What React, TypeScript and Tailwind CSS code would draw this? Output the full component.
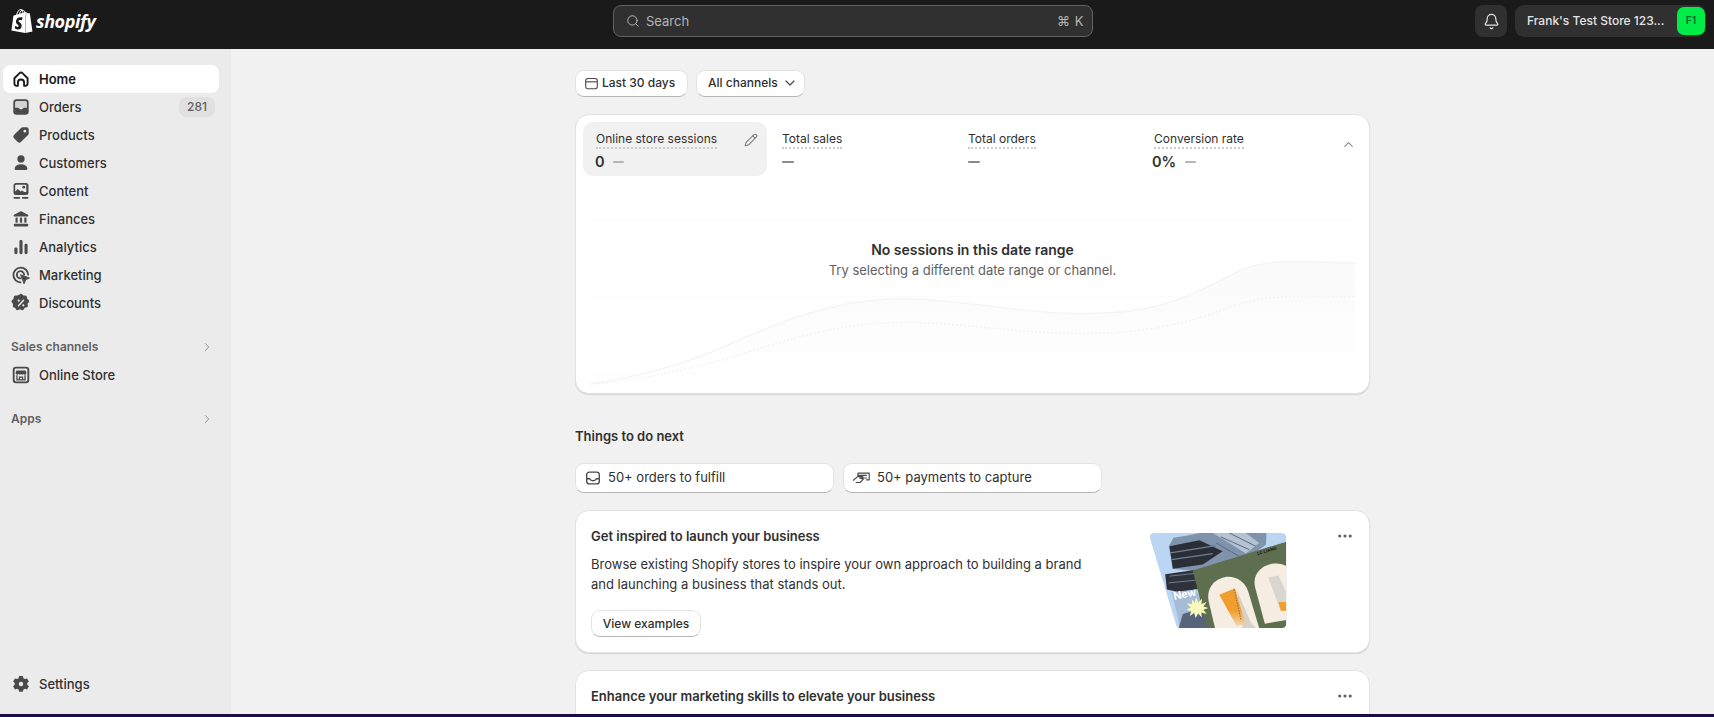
import { ReactNode } from "react"
import { SiShopify } from "react-icons/si"
import { ChevronDown, ChevronRight, ChevronUp, Ellipsis, Search, Pencil, Bell } from "lucide-react"

const ICON = "#4a4a4a"

function HomeIcon() {
  return (
    <svg viewBox="0 0 20 20" className="w-[22px] h-[22px]" fill="none" stroke="#1a1a1a" strokeWidth="1.7" strokeLinejoin="round">
      <path d="M4 9.300 8.700 4.700a1.900 1.900 0 0 1 2.600 0L16 9.300v4.900a2 2 0 0 1-2 2h-1.200v-3a2.800 2.800 0 0 0-5.600 0v3H6a2 2 0 0 1-2-2z" />
    </svg>
  )
}

function OrdersIcon() {
  return (
    <svg viewBox="0 0 20 20" className="w-[22px] h-[22px]">
      <path fill={ICON} fillRule="evenodd" d="M6 3h8a3 3 0 0 1 3 3v8a3 3 0 0 1-3 3H6a3 3 0 0 1-3-3V6a3 3 0 0 1 3-3zm-1.400 7.600h2.600c.6 0 .9.300 1.200.8.300.4.800.8 1.600.8s1.300-.4 1.600-.8c.3-.5.600-.8 1.200-.8h2.600V6A1.400 1.400 0 0 0 14 4.600H6A1.400 1.400 0 0 0 4.600 6z" />
      <path fill={ICON} opacity=".15" d="M4.600 6A1.400 1.400 0 0 1 6 4.600h8A1.400 1.400 0 0 1 15.400 6v4.600H4.600z" />
    </svg>
  )
}

function ProductsIcon() {
  return (
    <svg viewBox="0 0 20 20" className="w-[22px] h-[22px]">
      <path fill={ICON} fillRule="evenodd" d="M11.500 3H15a2 2 0 0 1 2 2v3.500c0 .6-.2 1.100-.6 1.500l-6.500 6.400a2 2 0 0 1-2.800 0l-3.500-3.500a2 2 0 0 1 0-2.800L10 3.600c.4-.4.900-.6 1.500-.6zM13.500 5.200a1.300 1.300 0 1 0 0 2.600 1.300 1.300 0 0 0 0-2.600z" />
    </svg>
  )
}

function CustomersIcon() {
  return (
    <svg viewBox="0 0 20 20" className="w-[22px] h-[22px]" fill={ICON}>
      <circle cx="10" cy="6.300" r="3.300" />
      <path d="M10 11.200c-3.400 0-5.500 1.700-5.800 3.700-.1.800.5 1.400 1.300 1.400h9c.8 0 1.400-.6 1.300-1.400-.3-2-2.400-3.700-5.800-3.700z" />
    </svg>
  )
}

function ContentIcon() {
  return (
    <svg viewBox="0 0 20 20" className="w-[22px] h-[22px]">
      <path fill={ICON} fillRule="evenodd" d="M5.500 2.800h9a2.300 2.300 0 0 1 2.300 2.300v6.200a2.300 2.300 0 0 1-2.300 2.300h-9a2.300 2.300 0 0 1-2.300-2.300V5.100a2.300 2.300 0 0 1 2.300-2.300zm-.8 7.600 2.400-2.300 2.600 2.400 1.200-1 2 1.500h1.900V5.100a.8.8 0 0 0-.8-.8h-8.500a.8.8 0 0 0-.8.8z" />
      <circle cx="12.500" cy="6.500" r="1.300" fill={ICON} />
      <rect x="3.200" y="15.500" width="6" height="1.500" rx=".7" fill={ICON} />
      <rect x="10.800" y="15.500" width="6" height="1.500" rx=".7" fill={ICON} />
    </svg>
  )
}

function FinancesIcon() {
  return (
    <svg viewBox="0 0 20 20" className="w-[22px] h-[22px]" fill={ICON}>
      <path d="M9.300 3.200a1.500 1.500 0 0 1 1.400 0l5.600 3c.7.400.4 1.500-.4 1.500H4.100c-.8 0-1.100-1.100-.4-1.500z" />
      <rect x="5" y="8.700" width="2" height="4.600" />
      <rect x="9" y="8.700" width="2" height="4.600" />
      <rect x="13" y="8.700" width="2" height="4.600" />
      <rect x="3.500" y="14.300" width="13" height="2.500" rx=".8" />
    </svg>
  )
}

function AnalyticsIcon() {
  return (
    <svg viewBox="0 0 20 20" className="w-[22px] h-[22px]" fill={ICON}>
      <rect x="4" y="10.500" width="2.800" height="6" rx="1.200" />
      <rect x="8.600" y="3.700" width="2.800" height="12.800" rx="1.200" />
      <rect x="13.200" y="7" width="2.800" height="9.500" rx="1.200" />
    </svg>
  )
}

function MarketingIcon() {
  return (
    <svg viewBox="0 0 20 20" className="w-[22px] h-[22px]" fill="none" stroke={ICON} strokeWidth="1.700" strokeLinecap="round">
      <path d="M16.500 9.500a6.700 6.700 0 1 0-7 7.200" />
      <path d="M12.800 9.600a3.300 3.300 0 1 0-3.300 3.500" />
      <path fill={ICON} strokeWidth=".8" strokeLinejoin="round" d="M9.800 9.800l8 3-3.400 1.400-1.500 3.500z" />
    </svg>
  )
}

function DiscountsIcon() {
  return (
    <svg viewBox="0 0 20 20" className="w-[22px] h-[22px]">
      <path fill={ICON} d="M8.500 2.400a2 2 0 0 1 3 0l.8.800 1.100-.1a2 2 0 0 1 2.100 1.900l.1 1.100.9.700a2 2 0 0 1 .2 3l-.7.900.2 1.100a2 2 0 0 1-1.700 2.400l-1.100.2-.6 1a2 2 0 0 1-2.800.8l-1-.5-1 .5a2 2 0 0 1-2.800-.8l-.6-1-1.100-.2A2 2 0 0 1 2.600 12l.2-1.100-.7-.9a2 2 0 0 1 .2-3l.9-.7.100-1.100A2 2 0 0 1 5.400 3.100l1.100.1z" />
      <path stroke="#ebebeb" strokeWidth="1.300" strokeLinecap="round" d="M12.300 7.500l-4.600 5" />
      <circle cx="7.900" cy="7.900" r="1" fill="#ebebeb" />
      <circle cx="12.100" cy="12.100" r="1" fill="#ebebeb" />
    </svg>
  )
}

function StoreIcon() {
  return (
    <svg viewBox="0 0 20 20" className="w-[22px] h-[22px]" fill="none">
      <rect x="2.500" y="2.500" width="15" height="15" rx="3" fill={ICON} />
      <rect x="4.200" y="4.200" width="11.600" height="11.600" rx="1.300" fill="#ebebeb" />
      <path fill={ICON} d="M5.800 5.800h8.400l.7 2.400a1.400 1.400 0 0 1-2.500 1 1.800 1.800 0 0 1-2.400 0 1.800 1.800 0 0 1-2.400 0 1.400 1.400 0 0 1-2.500-1z" />
      <path stroke={ICON} strokeWidth="1.200" d="M6.300 10.200v4.300h7.400v-4.300M8.600 14.500v-2.500h2.800v2.500" />
    </svg>
  )
}

function SettingsIcon() {
  return (
    <svg viewBox="0 0 20 20" className="w-[22px] h-[22px]">
      <path fill={ICON} fillRule="evenodd" d="M8.300 2.800h3.400l.5 2 1.300.7 2-.6 1.700 2.900-1.500 1.400v1.500l1.500 1.400-1.700 2.900-2-.6-1.300.7-.5 2H8.300l-.5-2-1.300-.7-2 .6-1.700-2.900 1.500-1.400V9.200L2.800 7.800l1.700-2.900 2 .6 1.300-.7zM10 8a2 2 0 1 0 0 4 2 2 0 0 0 0-4z" />
    </svg>
  )
}

function CalendarIcon() {
  return (
    <svg viewBox="0 0 16 16" className="w-[15px] h-[15px]" fill="none" stroke="#4a4a4a" strokeWidth="1.200">
      <rect x="1.800" y="2.600" width="12.400" height="11" rx="2.400" />
      <path d="M1.800 6.200h12.400" />
    </svg>
  )
}

function InboxOutlineIcon() {
  return (
    <svg viewBox="0 0 20 20" className="w-[18px] h-[18px]" fill="none" stroke="#4a4a4a" strokeWidth="1.500" strokeLinejoin="round">
      <rect x="3" y="3.500" width="14" height="13" rx="3" />
      <path d="M3 10.800h3.300c.6 1.400 2 2.200 3.700 2.200s3.100-.8 3.700-2.200H17" />
    </svg>
  )
}

function PaymentIcon() {
  return (
    <svg viewBox="0 0 22 20" className="w-[20px] h-[18px]" fill="none" stroke="#4a4a4a" strokeWidth="1.300" strokeLinecap="round" strokeLinejoin="round">
      <path d="M6.500 7V4.500h12.500v7.500h-3" />
      <path d="M6.500 7H16M9 10h7" />
      <path d="M1.500 12.500 6 8.500h5.500c.7 0 .9 1.400 0 1.500H8.500l4 1.300L9 15H4.500" />
    </svg>
  )
}

function NavItem({ icon, label, active, badge }: { icon: ReactNode; label: string; active?: boolean; badge?: string }) {
  return (
    <div className={`h-[28px] ml-[3px] mr-[12px] pl-[7px] pr-[4px] flex items-center rounded-[8px] ${active ? "bg-white text-[#1a1a1a] font-semibold" : "text-[#303030] font-medium"}`}>
      <span className="w-[22px] h-[22px] flex items-center justify-center shrink-0">{icon}</span>
      <span className="ml-[7px] pt-[2px] text-[13px]">{label}</span>
      {badge && (
        <span className="ml-auto h-[20px] w-[36px] rounded-[8px] bg-[#e0e0e0] text-[#616161] text-[12px] font-medium flex items-center justify-center">{badge}</span>
      )}
    </div>
  )
}

function SectionLabel({ label }: { label: string }) {
  return (
    <div className="h-[28px] pl-[11px] pr-[17px] flex items-center justify-between text-[#616161]">
      <span className="text-[12px] font-semibold">{label}</span>
      <ChevronRight className="w-[14px] h-[14px] text-[#8a8a8a]" strokeWidth={1.600} />
    </div>
  )
}

function Metric({ label, children, selected }: { label: string; children: ReactNode; selected?: boolean }) {
  return (
    <div className={`w-[184px] h-[54px] rounded-[10px] pl-[13px] pr-[9px] pt-[9px] ${selected ? "bg-[#f1f1f1]" : ""}`}>
      <div className="flex items-center justify-between">
        <span className="text-[12px] leading-[16px] text-[#303030] border-b-2 border-dotted border-[#cccccc]">{label}</span>
        {selected && <Pencil className="w-[14px] h-[14px] text-[#7a7a7a]" strokeWidth={1.800} />}
      </div>
      <div className="mt-[2px] flex items-center h-[22px] text-[#303030]">{children}</div>
    </div>
  )
}

function Dash({ className }: { className: string }) {
  return <span className={`h-[2px] rounded-full ${className}`} />
}

function OutlineButton({ children, className }: { children: ReactNode; className?: string }) {
  return (
    <div className={`bg-white rounded-[9px] border border-[#e3e3e3] border-b-[#b5b5b5] flex items-center whitespace-nowrap ${className ?? ""}`}>{children}</div>
  )
}

function Promo() {
  return (
    <svg viewBox="0 0 412 286" className="w-[138px] h-[95px] shrink-0">
      <defs>
        <clipPath id="promo-clip">
          <path d="M14 0H398a14 14 0 0 1 14 14V272a14 14 0 0 1-14 14H92a12 12 0 0 1-12-9L1 14Q0 0 14 0Z" />
        </clipPath>
        <linearGradient id="tube" x1="0" y1="0" x2="0" y2="1">
          <stop offset="0.6" stopColor="#f29e2e" />
          <stop offset="1" stopColor="#f0d9b5" />
        </linearGradient>
      </defs>
      <g clipPath="url(#promo-clip)">
        <rect width="412" height="286" fill="#bad6f2" />
        <path d="M152 0H352L350 35 290 80 180 120 70 108 58 40 72 14 110 8Z" fill="#7f93ad" />
        <path d="M60 40 150 22 220 55 160 95 70 108Z" fill="#2b2e35" />
        <path d="M62 60 200 38M66 80 190 62" stroke="#6f7f96" strokeWidth="4" />
        <path d="M190 0H290L330 30 290 62 240 30Z" fill="#b4c2d4" />
        <path d="M215 12 300 50M240 0 320 40M200 30 270 70" stroke="#5c6b80" strokeWidth="3" />
        <path d="M180 118 130 112 47 124 52 170 90 178 150 168Z" fill="#2f323a" />
        <path d="M60 130 150 120M58 150 140 142" stroke="#6f7f96" strokeWidth="3" />
        <path d="M66 178 140 170 178 250 90 286 84 250Z" fill="#a6bcd6" />
        <path d="M100 244 160 226 180 286H88Z" fill="#57647a" />
        <text x="74" y="202" fill="#ffffff" fontSize="32" fontWeight="700" fontFamily="Inter, sans-serif" transform="rotate(-12 74 202)">New</text>
        <path d="M130 113 412 26V286H174Z" fill="#5e6f50" />
        <path d="M197 286 178 206C170 165 195 140 225 133 255 127 285 142 297 176L330 286Z" fill="#f5ece2" />
        <path d="M347 273 318 165C308 125 335 100 365 93 385 90 400 92 412 100V262Z" fill="#f5ece2" />
        <path d="M262 170 305 270 320 286H280Z" fill="#cfcac2" opacity=".8" />
        <path d="M210 186 257 166 288 274 262 280Z" fill="url(#tube)" />
        <path d="M255 170 275 262" stroke="#8a6a3a" strokeWidth="3" strokeDasharray="4 4" />
        <path d="M357 134 388 128 412 180V234H395Z" fill="#d9d6cf" />
        <path d="M388 208H412V234H395Z" fill="#f29e2e" />
        <path d="M140 193 146 210 158 198 156 214 172 208 162 221 177 226 162 231 172 244 156 239 157 254 146 242 139 256 134 241 121 250 125 235 110 232 124 224 112 212 128 214 127 199 136 211Z" fill="#f8f9bb" />
        <text x="326" y="66" fill="#1a1a1a" fontSize="13" fontWeight="700" fontFamily="Inter, sans-serif" transform="rotate(-16 326 66)">LC LIANG</text>
      </g>
    </svg>
  )
}

export default function App() {
  return (
    <div className="h-[717px] w-full overflow-hidden flex flex-col bg-[#f1f1f1] font-['Inter',sans-serif] text-[#303030]">
      <header className="h-[49px] shrink-0 bg-[#1a1a1a] flex items-start pt-[5px] pl-[10px] pr-[8px]">
        <div className="w-[603px] h-[32px] flex items-center text-white shrink-0">
          <SiShopify className="w-[24px] h-[26px]" />
          <span className="ml-[2px] mb-[1px] font-['Noto_Sans',sans-serif] italic font-bold text-[18px] leading-none tracking-[-0.4px]">shopify</span>
        </div>
        <div className="w-[480px] h-[32px] rounded-[8px] bg-[#303030] border border-[#616161] flex items-center pl-[12px] pr-[8px] text-[#b5b5b5]">
          <Search className="w-[14px] h-[14px]" strokeWidth={1.700} />
          <span className="ml-[6px] pt-[1px] text-[13px]">Search</span>
          <span className="ml-auto pt-[1px] text-[13px] tracking-[0.5px]">⌘ K</span>
        </div>
        <div className="ml-auto w-[32px] h-[32px] rounded-[8px] bg-[#303030] flex items-center justify-center text-[#e3e3e3]">
          <Bell className="w-[17px] h-[17px]" strokeWidth={1.700} />
        </div>
        <div className="ml-[8px] w-[191px] h-[32px] rounded-[9px] bg-[#303030] flex items-center pl-[12px] pr-[1px]">
          <span className="text-[12px] font-medium text-[#e3e3e3] whitespace-nowrap">Frank's Test Store 123...</span>
          <span className="ml-auto w-[28px] h-[28px] rounded-[7px] bg-[#00ed47] text-[#0b6b2a] text-[10.500px] font-semibold flex items-center justify-center">F1</span>
        </div>
      </header>

      <div className="flex flex-1 min-h-0">
        <nav className="w-[231px] shrink-0 bg-[#ebebeb] pt-[16px] pb-[16px] flex flex-col">
          <NavItem icon={<HomeIcon />} label="Home" active />
          <NavItem icon={<OrdersIcon />} label="Orders" badge="281" />
          <NavItem icon={<ProductsIcon />} label="Products" />
          <NavItem icon={<CustomersIcon />} label="Customers" />
          <NavItem icon={<ContentIcon />} label="Content" />
          <NavItem icon={<FinancesIcon />} label="Finances" />
          <NavItem icon={<AnalyticsIcon />} label="Analytics" />
          <NavItem icon={<MarketingIcon />} label="Marketing" />
          <NavItem icon={<DiscountsIcon />} label="Discounts" />
          <div className="mt-[16px]">
            <SectionLabel label="Sales channels" />
          </div>
          <NavItem icon={<StoreIcon />} label="Online Store" />
          <div className="mt-[16px]">
            <SectionLabel label="Apps" />
          </div>
          <div className="mt-auto">
            <NavItem icon={<SettingsIcon />} label="Settings" />
          </div>
        </nav>

        <main className="flex-1 min-w-0 overflow-hidden">
          <div className="w-[795px] mx-auto pt-[21px]">
            <div className="flex gap-[8px]">
              <OutlineButton className="h-[27px] w-[113px] pl-[8px] pb-[1px] gap-[3px] text-[12px] font-medium text-[#303030]">
                <CalendarIcon />
                <span>Last 30 days</span>
              </OutlineButton>
              <OutlineButton className="h-[27px] w-[109px] pl-[11px] pb-[1px] gap-[4px] text-[12px] font-medium text-[#303030]">
                <span>All channels</span>
                <ChevronDown className="w-[16px] h-[16px] text-[#4a4a4a]" strokeWidth={1.800} />
              </OutlineButton>
            </div>

            <section className="relative mt-[17px] h-[280px] bg-white rounded-[14px] border border-[#e3e3e3] shadow-[0_1px_1px_rgba(0,0,0,0.12)] overflow-hidden">
              <div className="relative z-10 flex items-start gap-[2px] pt-[7px] pl-[7px]">
                <Metric label="Online store sessions" selected>
                  <span className="-ml-[1px] text-[14.500px] font-semibold">0</span>
                  <Dash className="ml-[8px] w-[11px] bg-[#b5b5b5]" />
                </Metric>
                <Metric label="Total sales">
                  <Dash className="w-[12px] bg-[#8a8a8a]" />
                </Metric>
                <Metric label="Total orders">
                  <Dash className="w-[12px] bg-[#8a8a8a]" />
                </Metric>
                <Metric label="Conversion rate">
                  <span className="-ml-[2px] text-[14.500px] font-semibold">0%</span>
                  <Dash className="ml-[9px] w-[11px] bg-[#b5b5b5]" />
                </Metric>
                <ChevronUp className="ml-[14px] mt-[15px] w-[15px] h-[15px] text-[#8a8a8a]" strokeWidth={1.800} />
              </div>

              <svg viewBox="0 0 795 280" className="absolute inset-0 w-full h-full" fill="none">
                <defs>
                  <linearGradient id="area" x1="0" y1="0" x2="0" y2="1">
                    <stop offset="0" stopColor="#fafafa" />
                    <stop offset="1" stopColor="#ffffff" />
                  </linearGradient>
                </defs>
                <path d="M12 105H783M12 183H783M12 229H783M12 262H783" stroke="#fbfbfb" />
                <path d="M12 271C60 264 105 252 148 233C195 212 255 185 327 185C390 185 440 200 505 200C570 200 600 192 658 161C695 141 730 149 783 149V271Z" fill="url(#area)" />
                <path d="M12 271C60 264 105 252 148 233C195 212 255 185 327 185C390 185 440 200 505 200C570 200 600 192 658 161C695 141 730 149 783 149" stroke="#f5f5f5" strokeWidth="1.500" />
                <path d="M12 271C60 268 100 258 148 246C195 232 255 209 327 209C390 209 440 220 505 220C560 220 605 214 658 193C695 180 730 183 783 183" stroke="#f3f3f3" strokeWidth="1.500" strokeDasharray="2 2" />
              </svg>

              <div className="absolute left-0 right-0 top-[125px] text-center">
                <div className="text-[14px] leading-[20px] font-semibold text-[#303030]">No sessions in this date range</div>
                <div className="text-[13px] leading-[20px] text-[#616161]">Try selecting a different date range or channel.</div>
              </div>
            </section>

            <h2 className="mt-[33px] text-[13px] leading-[18px] font-semibold text-[#303030]">Things to do next</h2>

            <div className="mt-[18px] flex gap-[9px]">
              <OutlineButton className="w-[259px] h-[30px] pl-[8px] gap-[6px] text-[13px] text-[#303030]">
                <InboxOutlineIcon />
                <span>50+ orders to fulfill</span>
              </OutlineButton>
              <OutlineButton className="w-[259px] h-[30px] pl-[8px] gap-[5px] text-[13px] text-[#303030]">
                <PaymentIcon />
                <span>50+ payments to capture</span>
              </OutlineButton>
            </div>

            <section className="mt-[17px] h-[143px] bg-white rounded-[14px] border border-[#e3e3e3] shadow-[0_1px_1px_rgba(0,0,0,0.12)] pl-[15px] pr-[15px] pt-[15px] flex">
              <div className="w-[500px]">
                <h3 className="text-[13px] leading-[20px] font-semibold text-[#303030]">Get inspired to launch your business</h3>
                <p className="mt-[8px] text-[13px] leading-[20px] text-[#303030]">
                  Browse existing Shopify stores to inspire your own approach to building a brand and launching a business that stands out.
                </p>
                <OutlineButton className="mt-[16px] w-[110px] h-[27px] justify-center text-[12px] font-medium text-[#303030]">View examples</OutlineButton>
              </div>
              <div className="ml-[58px] mt-[7px]">
                <Promo />
              </div>
              <Ellipsis className="ml-auto mt-[1px] w-[18px] h-[18px] text-[#616161]" strokeWidth={2.200} />
            </section>

            <section className="mt-[17px] h-[100px] bg-white rounded-[14px] border border-[#e3e3e3] pl-[15px] pr-[15px] pt-[15px] flex">
              <h3 className="text-[13px] leading-[20px] font-semibold text-[#303030]">Enhance your marketing skills to elevate your business</h3>
              <Ellipsis className="ml-auto mt-[1px] w-[18px] h-[18px] text-[#616161]" strokeWidth={2.200} />
            </section>
          </div>
        </main>
      </div>

      <div className="h-[3px] shrink-0 bg-[#1c0d45]" />
    </div>
  )
}
